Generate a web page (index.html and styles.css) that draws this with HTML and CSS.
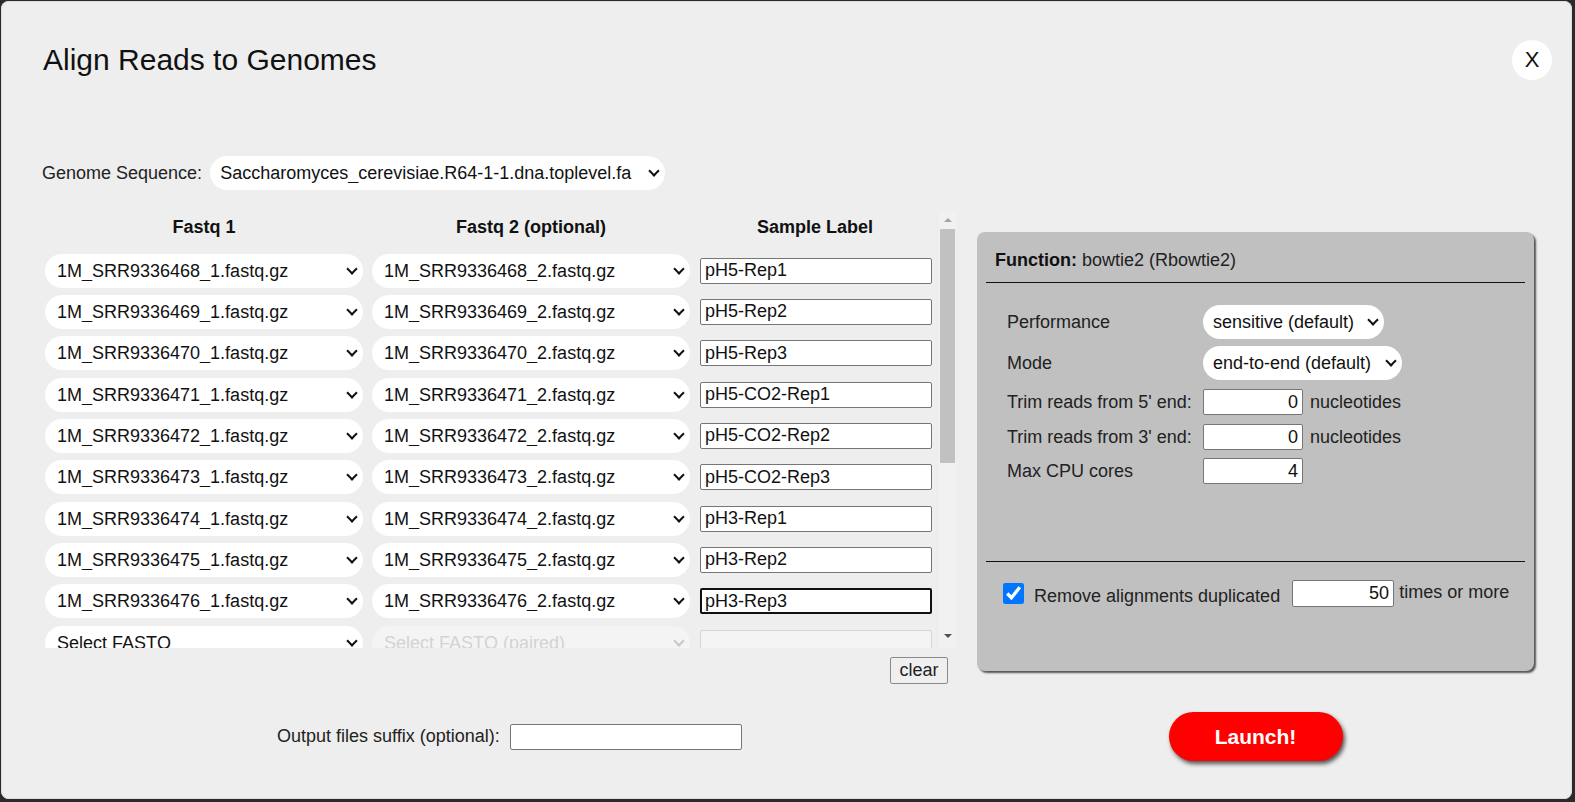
FILE: index.html
```html
<!DOCTYPE html>
<html lang="en">
<head>
<meta charset="utf-8">
<title>Align Reads to Genomes</title>
<link rel="stylesheet" href="styles.css">
</head>
<body>
<div class="dialog">
  <div class="top">
    <h1 class="title">Align Reads to Genomes</h1>
    <button class="close">X</button>
  </div>

  <div class="genome">
    <label class="genome-label">Genome Sequence:</label>
    <span class="sel genome-sel"><select class="pill"><option>Saccharomyces_cerevisiae.R64-1-1.dna.toplevel.fa</option></select></span>
  </div>

  <div class="main">
    <div class="left">
      <div class="table-box">
        <div class="scroller">
          <div class="grid head">
            <div class="hcell">Fastq 1</div>
            <div class="hcell">Fastq 2 (optional)</div>
            <div class="hcell">Sample Label</div>
          </div>
          <div class="rows">
            <div class="grid row"><span class="sel"><select class="pill fq"><option>1M_SRR9336468_1.fastq.gz</option></select></span><span class="sel"><select class="pill fq"><option>1M_SRR9336468_2.fastq.gz</option></select></span><input class="lbl" type="text" value="pH5-Rep1"></div>
            <div class="grid row"><span class="sel"><select class="pill fq"><option>1M_SRR9336469_1.fastq.gz</option></select></span><span class="sel"><select class="pill fq"><option>1M_SRR9336469_2.fastq.gz</option></select></span><input class="lbl" type="text" value="pH5-Rep2"></div>
            <div class="grid row"><span class="sel"><select class="pill fq"><option>1M_SRR9336470_1.fastq.gz</option></select></span><span class="sel"><select class="pill fq"><option>1M_SRR9336470_2.fastq.gz</option></select></span><input class="lbl" type="text" value="pH5-Rep3"></div>
            <div class="grid row"><span class="sel"><select class="pill fq"><option>1M_SRR9336471_1.fastq.gz</option></select></span><span class="sel"><select class="pill fq"><option>1M_SRR9336471_2.fastq.gz</option></select></span><input class="lbl" type="text" value="pH5-CO2-Rep1"></div>
            <div class="grid row"><span class="sel"><select class="pill fq"><option>1M_SRR9336472_1.fastq.gz</option></select></span><span class="sel"><select class="pill fq"><option>1M_SRR9336472_2.fastq.gz</option></select></span><input class="lbl" type="text" value="pH5-CO2-Rep2"></div>
            <div class="grid row"><span class="sel"><select class="pill fq"><option>1M_SRR9336473_1.fastq.gz</option></select></span><span class="sel"><select class="pill fq"><option>1M_SRR9336473_2.fastq.gz</option></select></span><input class="lbl" type="text" value="pH5-CO2-Rep3"></div>
            <div class="grid row"><span class="sel"><select class="pill fq"><option>1M_SRR9336474_1.fastq.gz</option></select></span><span class="sel"><select class="pill fq"><option>1M_SRR9336474_2.fastq.gz</option></select></span><input class="lbl" type="text" value="pH3-Rep1"></div>
            <div class="grid row"><span class="sel"><select class="pill fq"><option>1M_SRR9336475_1.fastq.gz</option></select></span><span class="sel"><select class="pill fq"><option>1M_SRR9336475_2.fastq.gz</option></select></span><input class="lbl" type="text" value="pH3-Rep2"></div>
            <div class="grid row"><span class="sel"><select class="pill fq"><option>1M_SRR9336476_1.fastq.gz</option></select></span><span class="sel"><select class="pill fq"><option>1M_SRR9336476_2.fastq.gz</option></select></span><input class="lbl focused" type="text" value="pH3-Rep3"></div>
            <div class="grid row"><span class="sel"><select class="pill fq"><option>Select FASTQ</option></select></span><span class="sel off"><select class="pill fq" disabled><option>Select FASTQ (paired)</option></select></span><input class="lbl" type="text" disabled></div>
            <div class="grid row"><span class="sel"><select class="pill fq"><option>Select FASTQ</option></select></span><span class="sel off"><select class="pill fq" disabled><option>Select FASTQ (paired)</option></select></span><input class="lbl" type="text" disabled></div>
          </div>
        </div>
        <div class="vscroll">
          <span class="sb-btn"><span class="tri-up"></span></span>
          <span class="sb-thumb"></span>
          <span class="sb-fill"></span>
          <span class="sb-btn"><span class="tri-down"></span></span>
        </div>
      </div>
      <div class="clear-row"><button class="clear">clear</button></div>
    </div>

    <div class="panel">
      <div class="panel-head"><b>Function:</b> bowtie2 (Rbowtie2)</div>
      <div class="settings">
        <div class="set-row tall r1"><span class="set-label">Performance</span><span class="sel perf"><select class="pill"><option>sensitive (default)</option></select></span></div>
        <div class="set-row tall r2"><span class="set-label">Mode</span><span class="sel mode"><select class="pill"><option>end-to-end (default)</option></select></span></div>
        <div class="set-row r3"><span class="set-label">Trim reads from 5' end:</span><input class="num" type="text" value="0"><span class="unit">nucleotides</span></div>
        <div class="set-row r3"><span class="set-label">Trim reads from 3' end:</span><input class="num" type="text" value="0"><span class="unit">nucleotides</span></div>
        <div class="set-row r5"><span class="set-label">Max CPU cores</span><input class="num" type="text" value="4"></div>
      </div>
      <div class="dup">
        <input class="check" type="checkbox" checked>
        <span class="dup-text">Remove alignments duplicated</span>
        <input class="num dup-num" type="text" value="50">
        <span class="dup-after">times or more</span>
      </div>
    </div>
  </div>

  <div class="footer">
    <div class="suffix">
      <label class="suffix-label">Output files suffix (optional):</label>
      <input class="suffix-input" type="text">
    </div>
    <div class="launch-wrap"><button class="launch">Launch!</button></div>
  </div>
</div>
</body>
</html>
```

FILE: styles.css
```css
* { box-sizing: border-box; }

html, body {
  margin: 0;
  height: 100%;
}

body {
  background: #2a2a2a;
  padding: 1px 3px 3px 1px;
  font-family: "Liberation Sans", Arial, sans-serif;
  font-size: 18px;
  color: #111;
  overflow: hidden;
}

.dialog {
  width: 1571px;
  height: 798px;
  background: #eeeeee;
  border-radius: 8px;
  padding: 38px 20px 0 41px;
  box-shadow: inset 0 0 0 1px #dcdcdc;
}

/* ---------- header ---------- */
.top {
  display: flex;
  justify-content: space-between;
  align-items: center;
  height: 41px;
}

.title {
  margin: 0 0 0 1px;
  font-size: 30px;
  font-weight: normal;
  line-height: 36px;
  color: #111;
}

.close {
  width: 40px;
  height: 40px;
  border-radius: 50%;
  border: none;
  background: #fff;
  font-family: "Liberation Sans", Arial, sans-serif;
  font-size: 22px;
  color: #111;
  padding: 0;
  line-height: 40px;
}

/* ---------- selects ---------- */
.sel {
  position: relative;
  display: block;
}

.sel::after {
  content: "";
  position: absolute;
  right: 7px;
  top: calc(50% - 6px);
  width: 6px;
  height: 6px;
  border-right: 2.5px solid #111;
  border-bottom: 2.5px solid #111;
  transform: rotate(45deg);
  pointer-events: none;
}

.sel.off::after {
  border-color: #c8c8c8;
}

.pill {
  -webkit-appearance: none;
  appearance: none;
  display: block;
  width: 100%;
  height: 34px;
  border: none;
  border-radius: 17px;
  background: #fff;
  font-family: "Liberation Sans", Arial, sans-serif;
  font-size: 18px;
  color: #111;
  padding: 0 26px 0 10px;
  outline: none;
}

/* ---------- genome row ---------- */
.genome {
  display: flex;
  align-items: center;
  margin-top: 76px;
  height: 34px;
}

.genome-label {
  margin-right: 8px;
  color: #222;
}

.genome-sel {
  width: 455px;
}

/* ---------- main ---------- */
.main {
  display: flex;
  align-items: flex-start;
  margin-top: 21px;
}

.left {
  width: 914px;
  flex: none;
}

.table-box {
  display: flex;
  height: 437px;
}

.scroller {
  width: 897px;
  flex: none;
  overflow: hidden;
  padding-left: 3px;
}

.grid {
  display: grid;
  grid-template-columns: 318px 318px 232px;
  column-gap: 9px;
}

.head {
  height: 33px;
  align-items: center;
}

.hcell {
  text-align: center;
  font-weight: bold;
  color: #111;
}

.rows {
  padding-top: 9.5px;
  display: flex;
  flex-direction: column;
  gap: 7.35px;
}

.row {
  height: 34px;
  align-items: center;
}

.fq {
  padding-left: 12px;
}

.fq:disabled {
  background: #f7f7f7;
  color: #c8c8c8;
}

.lbl {
  height: 26px;
  width: 232px;
  margin-left: 1px;
  border: 1px solid #767676;
  border-radius: 2px;
  background: #fff;
  font-family: "Liberation Sans", Arial, sans-serif;
  font-size: 18px;
  color: #111;
  padding: 0 4px;
  outline: none;
}

.lbl.focused {
  border: 2px solid #101010;
  padding: 0 3px;
}

.lbl:disabled {
  background: #f4f4f4;
  border-color: #d6d6d6;
}

/* fake classic scrollbar */
.vscroll {
  width: 17px;
  flex: none;
  background: #f1f1f1;
  display: flex;
  flex-direction: column;
  align-items: center;
}

.sb-btn {
  height: 17px;
  width: 17px;
  flex: none;
  display: flex;
  align-items: center;
  justify-content: center;
}

.sb-btn:last-child {
  margin-bottom: 4px;
}

.tri-up {
  width: 0;
  height: 0;
  border-left: 4px solid transparent;
  border-right: 4px solid transparent;
  border-bottom: 4px solid #a3a3a3;
}

.tri-down {
  width: 0;
  height: 0;
  border-left: 4px solid transparent;
  border-right: 4px solid transparent;
  border-top: 4px solid #505050;
}

.sb-thumb {
  width: 15px;
  height: 234px;
  margin-top: 1px;
  background: #c1c1c1;
  flex: none;
}

.sb-fill { flex: 1; }

.clear-row {
  display: flex;
  justify-content: flex-end;
  padding-right: 8px;
  margin-top: 9px;
}

.clear {
  height: 27px;
  width: 58px;
  padding: 0;
  border: 1px solid #8a8a8a;
  border-radius: 2px;
  background: #efefef;
  font-family: "Liberation Sans", Arial, sans-serif;
  font-size: 18px;
  color: #222;
}

/* ---------- right panel ---------- */
.panel {
  flex: none;
  width: 557px;
  height: 439px;
  margin: 21px 0 0 21px;
  background: #c0c0c0;
  border-radius: 8px;
  box-shadow: 2px 2px 2px #555;
  padding: 0 9px;
}

.panel-head {
  height: 51px;
  padding: 18px 0 0 9px;
  border-bottom: 1px solid #111;
  line-height: 21px;
  color: #222;
}

.panel-head b { color: #111; }

.settings {
  height: 279px;
  border-bottom: 1px solid #111;
  padding: 22px 0 0 21px;
}

.set-row {
  display: flex;
  align-items: center;
  height: 26px;
  color: #222;
}

.set-row.tall { height: 34px; }
.set-row.r2 { margin-top: 7px; }
.set-row.r3 { margin-top: 9px; }
.set-row.r5 { margin-top: 8px; }

.set-label {
  width: 196px;
  flex: none;
}

.perf { width: 181px; }
.mode { width: 199px; }

.num {
  width: 100px;
  height: 26px;
  border: 1px solid #767676;
  border-radius: 2px;
  background: #fff;
  font-family: "Liberation Sans", Arial, sans-serif;
  font-size: 18px;
  color: #111;
  text-align: right;
  padding: 0 4px;
  outline: none;
}

.unit {
  margin-left: 7px;
}

.dup {
  display: flex;
  align-items: center;
  padding: 18px 0 0 17px;
  color: #222;
}

.check {
  width: 21px;
  height: 21px;
  margin: 0 10px 0 0;
  accent-color: #0075ff;
}

.dup-text {
  margin-top: 5px;
  margin-right: 12px;
}

.dup-num {
  width: 102px;
  height: 27px;
}

.dup-after {
  margin-left: 5px;
  margin-top: -2px;
}

/* ---------- footer ---------- */
.footer {
  display: flex;
  align-items: center;
  margin-top: 28px;
  height: 49px;
}

.suffix {
  width: 914px;
  flex: none;
  display: flex;
  align-items: center;
  padding-left: 235px;
}

.suffix-label {
  color: #222;
  margin-right: 10px;
}

.suffix-input {
  width: 232px;
  height: 26px;
  border: 1px solid #767676;
  border-radius: 2px;
  background: #fff;
  outline: none;
}

.launch-wrap {
  width: 557px;
  margin-left: 21px;
  display: flex;
  justify-content: center;
}

.launch {
  width: 174px;
  height: 49px;
  border: none;
  border-radius: 25px;
  background: #ff0000;
  color: #fff;
  font-family: "Liberation Sans", Arial, sans-serif;
  font-weight: bold;
  font-size: 21px;
  box-shadow: 2px 3px 4px #555;
}
```
